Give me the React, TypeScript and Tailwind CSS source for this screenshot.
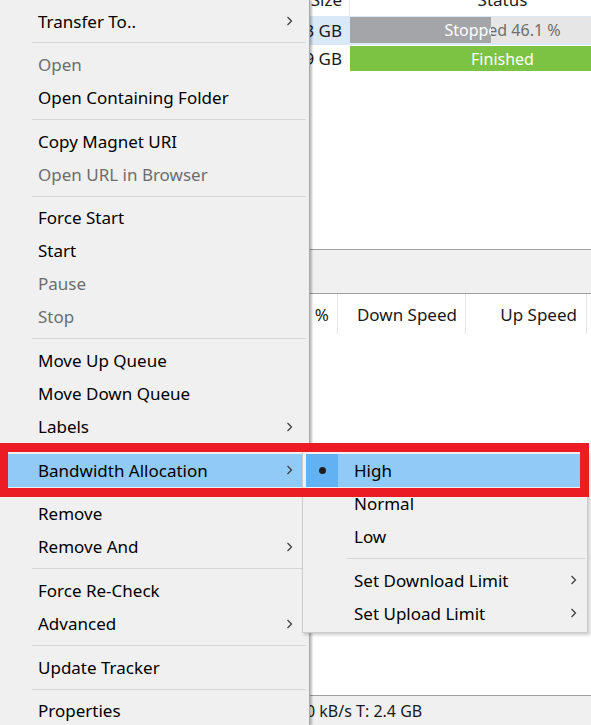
type Item = { label: string; disabled?: boolean; sub?: boolean; active?: boolean } | "sep";

const mainItems: Item[] = [
  { label: "Transfer To..", sub: true },
  "sep",
  { label: "Open", disabled: true },
  { label: "Open Containing Folder" },
  "sep",
  { label: "Copy Magnet URI" },
  { label: "Open URL in Browser", disabled: true },
  "sep",
  { label: "Force Start" },
  { label: "Start" },
  { label: "Pause", disabled: true },
  { label: "Stop", disabled: true },
  "sep",
  { label: "Move Up Queue" },
  { label: "Move Down Queue" },
  { label: "Labels", sub: true },
  "sep",
  { label: "Bandwidth Allocation", sub: true, active: true },
  "sep",
  { label: "Remove" },
  { label: "Remove And", sub: true },
  "sep",
  { label: "Force Re-Check" },
  { label: "Advanced", sub: true },
  "sep",
  { label: "Update Tracker" },
  "sep",
  { label: "Properties" },
];

const subItems: Item[] = [
  { label: "High", active: true },
  { label: "Normal" },
  { label: "Low" },
  "sep",
  { label: "Set Download Limit", sub: true },
  { label: "Set Upload Limit", sub: true },
];

function Chevron() {
  return (
    <svg width="7" height="10" viewBox="0 0 7 10" className="shrink-0">
      <polyline points="1.5,1 5.5,5 1.5,9" fill="none" stroke="#3a3a3a" strokeWidth="1.2" />
    </svg>
  );
}

function MainMenu() {
  return (
    <div className="absolute left-0 top-0 w-[310px] h-[725px] bg-[#f0f0f0] border-r border-[#a8a8a8] shadow-[2px_0_2px_rgba(0,0,0,0.25)] pt-[4.5px]">
      {mainItems.map((it, i) =>
        it === "sep" ? (
          <div key={i} className="h-[10.67px] flex items-center ml-[32px] w-[274px]">
            <div className="h-px w-full bg-[#d5d5d5]" />
          </div>
        ) : (
          <div
            key={i}
            className={
              "h-[33px] ml-[2px] w-[300px] flex items-center justify-between pl-[36px] pr-[9px] " +
              (it.active ? "bg-[#91c9f7]" : "")
            }
          >
            <span className={it.disabled ? "text-[#6d6d6d]" : "text-black"}>{it.label}</span>
            {it.sub && <Chevron />}
          </div>
        )
      )}
    </div>
  );
}

function SubMenu() {
  return (
    <div className="absolute left-[302px] top-[451px] w-[286px] bg-[#f0f0f0] border border-[#cccccc] shadow-[2px_2px_3px_rgba(0,0,0,0.2)] pt-[2px] pb-[2px] pl-[3px] pr-[2px]">
      {subItems.map((it, i) =>
        it === "sep" ? (
          <div key={i} className="h-[10.67px] flex items-center ml-[41px]">
            <div className="h-px w-full bg-[#d5d5d5]" />
          </div>
        ) : (
          <div key={i} className={"h-[33px] flex items-center pr-[8px] " + (it.active ? "bg-[#91c9f7]" : "")}>
            <div className={"w-[32px] h-full flex items-center justify-center " + (it.active ? "bg-[#62b1f3]" : "")}>
              {it.active && <div className="w-[7px] h-[7px] rounded-full bg-[#1e1e1e]" />}
            </div>
            <span className="ml-[16px] flex-1 text-black">{it.label}</span>
            {it.sub && <Chevron />}
          </div>
        )
      )}
    </div>
  );
}

function Background() {
  return (
    <div className="flex flex-col h-full">
      {/* torrent list */}
      <div className="flex h-[30px] mt-[-14px] shrink-0">
        <div className="w-[349px] shrink-0 flex items-center justify-end pr-[7px] pb-[4px] text-[#1a1a1a]">Size</div>
        <div className="w-px shrink-0 bg-[#e5e5e5]" />
        <div className="w-[305px] shrink-0 flex items-center justify-center pb-[4px] text-[#1a1a1a]">Status</div>
      </div>
      <div className="flex h-[29px] shrink-0 bg-[#d9e9f8] pt-[1px] pb-[2px]">
        <div className="w-[350px] shrink-0 flex items-center justify-end pr-[8px] text-[#1a1a1a]">3 GB</div>
        <div className="relative w-[305px] shrink-0 bg-[#e6e6e6] text-[16px]">
          <div className="absolute inset-0 flex items-center justify-center text-[#6e6e6e]">Stopped 46.1 %</div>
          <div className="absolute left-0 top-0 bottom-0 w-[46.1%] bg-[#a3a5a8] overflow-hidden">
            <div className="w-[305px] h-full flex items-center justify-center text-white">Stopped 46.1 %</div>
          </div>
        </div>
      </div>
      <div className="flex h-[29px] shrink-0 pt-[1px] pb-[3px]">
        <div className="w-[350px] shrink-0 flex items-center justify-end pr-[8px] text-[#1a1a1a]">9 GB</div>
        <div className="w-[305px] shrink-0 bg-[#7cc243] flex items-center justify-center text-white text-[16px]">
          Finished
        </div>
      </div>
      <div className="h-[175px] shrink-0" />

      {/* details panel */}
      <div className="border-t border-[#a0a0a0] h-[44px] shrink-0 bg-[#f0f0f0]" />
      <div className="border-t border-[#a0a0a0] flex h-[41px] shrink-0">
        <div className="w-[337px] shrink-0 flex items-center justify-end pr-[8px] text-[#1a1a1a]">%</div>
        <div className="w-px shrink-0 bg-[#e5e5e5]" />
        <div className="w-[127px] shrink-0 flex items-center justify-end pr-[8px] text-[#1a1a1a]">Down Speed</div>
        <div className="w-px shrink-0 bg-[#e5e5e5]" />
        <div className="w-[120px] shrink-0 flex items-center justify-end pr-[9px] text-[#1a1a1a]">Up Speed</div>
        <div className="w-px shrink-0 bg-[#e5e5e5]" />
      </div>
      <div className="flex-1" />

      {/* status bar */}
      <div className="border-t border-[#a0a0a0] h-[30px] shrink-0 bg-[#f0f0f0] flex items-center pl-[306px] text-[16px] text-[#1a1a1a]">
        0 kB/s T: 2.4 GB
      </div>
    </div>
  );
}

export default function App() {
  return (
    <div className="relative w-[591px] h-[725px] overflow-hidden bg-white font-['Noto_Sans',sans-serif] text-[17px] leading-none">
      <Background />
      <MainMenu />
      <SubMenu />
      {/* annotation box */}
      <div className="absolute left-0 top-[443px] w-[589px] h-[54px] border-[9px] border-l-[8px] border-[#ec1c24]" />
    </div>
  );
}
